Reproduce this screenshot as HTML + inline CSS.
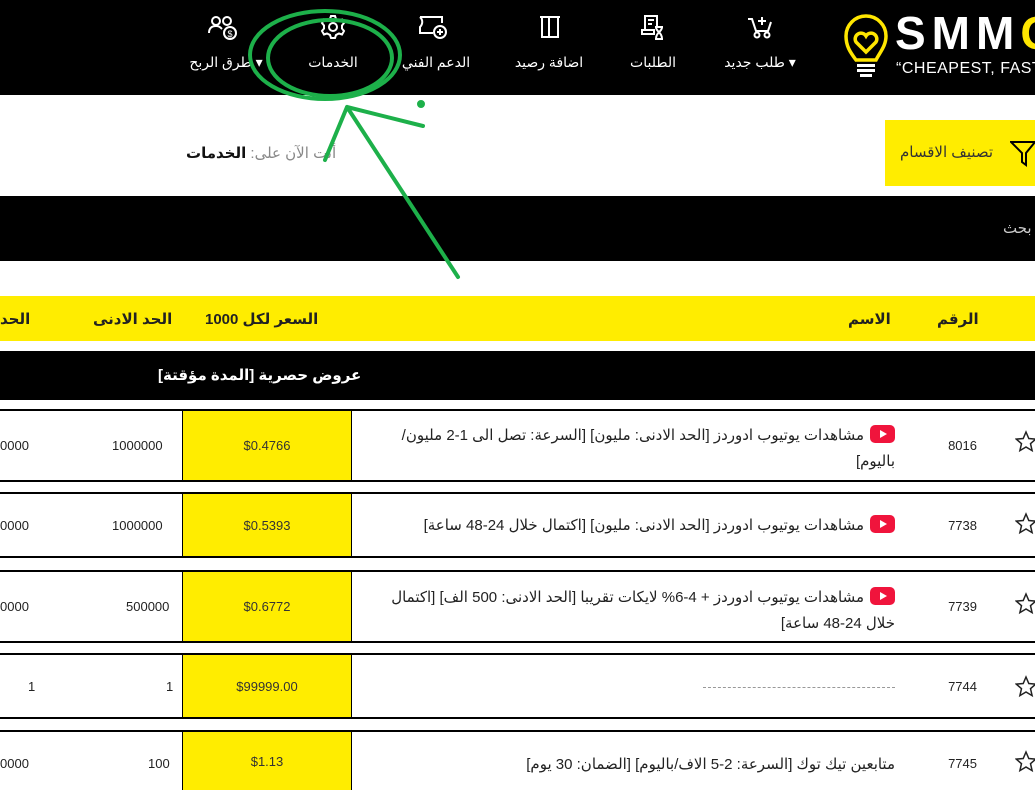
<!DOCTYPE html>
<html><head><meta charset="utf-8">
<style>
*{margin:0;padding:0;box-sizing:border-box}
body{width:1035px;height:774px;overflow:hidden;background:#fff;position:relative;font-family:"Liberation Sans","DejaVu Sans",sans-serif;font-size:14px;color:#222}
.a{position:absolute}
.nav{left:0;top:0;width:1035px;height:95px;background:#000}
.nl{position:absolute;top:54px;color:#fff;font-size:14px;white-space:nowrap;transform:translateX(-50%)}
.ic{position:absolute;top:14px}
.y{background:#ffed00}
.row{position:absolute;left:0;width:1035px;border-top:2px solid #000;border-bottom:2px solid #000}
.price{position:absolute;left:182px;width:170px;top:0;bottom:0;background:#ffed00;border-left:1px solid #000;border-right:1px solid #000;display:flex;align-items:center;justify-content:center;font-size:13px;color:#333}
.name{position:absolute;right:140px;width:525px;direction:rtl;text-align:right;font-size:15px;line-height:26px;color:#222}
.num{position:absolute;right:58px;font-size:13px}
.c1{position:absolute;left:112px;font-size:13px}
.c0{position:absolute;left:0;font-size:13px}
.yt{display:inline-block;width:25px;height:18px;background:#f0143c;border-radius:5px;vertical-align:-3px;margin-left:6px;position:relative}
.yt:after{content:"";position:absolute;left:10px;top:5px;border-left:7px solid #fff;border-top:4px solid transparent;border-bottom:4px solid transparent}
</style></head><body>
<div class="a nav"></div>
<svg class="a" style="left:842px;top:12px" width="48" height="66" viewBox="0 0 48 66">
<path d="M14 48 C8 40 4 34 4 24 A20 20 0 0 1 44 24 C44 34 38 40 34 48 Z" fill="none" stroke="#ffe600" stroke-width="3.5"/>
<path d="M24 40 L14 30 A5 5 0 0 1 24 24 A5 5 0 0 1 34 30 Z" fill="none" stroke="#ffe600" stroke-width="3.5"/>
<rect x="15" y="52" width="18" height="3" fill="#fff"/><rect x="15" y="57" width="18" height="3" fill="#fff"/><rect x="18" y="62" width="12" height="3" fill="#fff"/>
</svg>
<div class="a" style="left:895px;top:6px;color:#fff;font-weight:bold;font-size:46px;letter-spacing:6px;white-space:nowrap">SMM<span style="color:#ffe600">G</span></div>
<div class="a" style="left:896px;top:60px;color:#fff;font-size:16px;letter-spacing:0.5px;white-space:nowrap">“CHEAPEST, FASTEST</div>
<svg class="ic" style="left:746px" width="28" height="26" viewBox="0 0 28 26" fill="none" stroke="#fff" stroke-width="2"><path d="M2 5h4l4 12h12l3-9"/><circle cx="11" cy="21" r="2.5"/><circle cx="21" cy="21" r="2.5"/><path d="M16 3v8M12 7h8"/></svg>
<svg class="ic" style="left:640px" width="26" height="26" viewBox="0 0 26 26" fill="none" stroke="#fff" stroke-width="2"><path d="M5 16V2h12v10"/><path d="M2 16h12v4H2z"/><path d="M8 6h6M8 10h4"/><path d="M15 13h8M15 25h8M16 13c0 5 6 5 6 12M22 13c0 5-6 5-6 12"/></svg>
<svg class="ic" style="left:538px" width="24" height="26" viewBox="0 0 24 26" fill="none" stroke="#fff" stroke-width="2"><path d="M2 3h20M4 3v20h7V3M20 3v20h-9"/></svg>
<svg class="ic" style="left:418px" width="30" height="26" viewBox="0 0 30 26" fill="none" stroke="#fff" stroke-width="2"><path d="M2 3h22v6M2 3c3 3 3 7 0 10v6h13"/><circle cx="22" cy="18" r="6"/><path d="M22 15v6M19 18h6"/></svg>
<svg class="ic" style="left:320px" width="26" height="26" viewBox="0 0 26 26" fill="none" stroke="#fff" stroke-width="2"><path d="M11 2h4l1 3 3 1.5 3-1 2 3.5-2 2.5v3l2 2.5-2 3.5-3-1-3 1.5-1 3h-4l-1-3-3-1.5-3 1-2-3.5 2-2.5v-3L2 9l2-3.5 3 1L10 5z"/><circle cx="13" cy="13" r="4"/></svg>
<svg class="ic" style="left:208px" width="30" height="28" viewBox="0 0 30 28" fill="none" stroke="#fff" stroke-width="2"><circle cx="8" cy="7" r="4"/><path d="M1 19c0-5 3-7 7-7s5 2 6 3"/><circle cx="19" cy="7" r="4"/><circle cx="22" cy="19" r="6"/><text x="19.5" y="23" fill="#fff" stroke="none" font-size="9" font-family="Liberation Sans">$</text></svg>
<div class="nl" style="left:760px">طلب جديد ▾</div>
<div class="nl" style="left:653px">الطلبات</div>
<div class="nl" style="left:549px">اضافة رصيد</div>
<div class="nl" style="left:436px">الدعم الفني</div>
<div class="nl" style="left:333px">الخدمات</div>
<div class="nl" style="left:226px">طرق الربح ▾</div>
<div class="a y" style="left:885px;top:120px;width:150px;height:66px"></div>
<svg class="a" style="left:1010px;top:140px" width="25" height="27" viewBox="0 0 25 27" fill="none" stroke="#000" stroke-width="2"><path d="M1 2h24l-9 11v12l-4-3V13z"/></svg>
<div class="a" style="left:900px;top:143px;font-size:15px;color:#333">تصنيف الاقسام</div>
<div class="a" style="left:186px;top:144px;font-size:15px;direction:rtl;color:#888;white-space:nowrap"><span>أنت الآن على: </span><b style="color:#111">الخدمات</b></div>
<div class="a" style="left:0;top:196px;width:1035px;height:65px;background:#000"></div>
<div class="a" style="left:1003px;top:219px;color:#ccc;font-size:15px">بحث</div>
<div class="a y" style="left:0;top:296px;width:1035px;height:45px"></div>
<div class="a" style="left:937px;top:310px;font-weight:bold;font-size:15px">الرقم</div>
<div class="a" style="left:848px;top:310px;font-weight:bold;font-size:15px">الاسم</div>
<div class="a" style="left:205px;top:310px;font-weight:bold;font-size:15px">السعر لكل 1000</div>
<div class="a" style="left:93px;top:310px;font-weight:bold;font-size:15px">الحد الادنى</div>
<div class="a" style="left:0;top:310px;font-weight:bold;font-size:15px">الحد</div>
<div class="a" style="left:0;top:351px;width:1035px;height:49px;background:#000"></div>
<div class="a" style="left:158px;top:366px;color:#fff;font-weight:bold;font-size:15px">عروض حصرية [المدة مؤقتة]</div>
<div class="row" style="top:409px;height:73px">
 <div class="price">$0.4766</div>
 <div class="name" style="top:12px"><span class="yt"></span>مشاهدات يوتيوب ادوردز [الحد الادنى: مليون] [السرعة: تصل الى 1-2 مليون/ باليوم]</div>
 <div class="num" style="top:27px">8016</div><div class="c1" style="top:27px">1000000</div><div class="c0" style="top:27px">0000</div>
</div>
<div class="row" style="top:492px;height:66px">
 <div class="price">$0.5393</div>
 <div class="name" style="top:19px"><span class="yt"></span>مشاهدات يوتيوب ادوردز [الحد الادنى: مليون] [اكتمال خلال 24-48 ساعة]</div>
 <div class="num" style="top:24px">7738</div><div class="c1" style="top:24px">1000000</div><div class="c0" style="top:24px">0000</div>
</div>
<div class="row" style="top:570px;height:73px">
 <div class="price">$0.6772</div>
 <div class="name" style="top:13px"><span class="yt"></span>مشاهدات يوتيوب ادوردز + 4-6% لايكات تقريبا [الحد الادنى: 500 الف] [اكتمال خلال 24-48 ساعة]</div>
 <div class="num" style="top:27px">7739</div><div class="c1" style="top:27px;left:126px">500000</div><div class="c0" style="top:27px">0000</div>
</div>
<div class="row" style="top:653px;height:66px">
 <div class="price">$99999.00</div>
 <div class="a" style="left:703px;top:32px;width:192px;border-top:1px dashed #999"></div>
 <div class="num" style="top:24px">7744</div><div class="c1" style="top:24px;left:166px">1</div><div class="c0" style="top:24px;left:28px">1</div>
</div>
<div class="row" style="top:730px;height:60px;border-bottom:none">
 <div class="price">$1.13</div>
 <div class="name" style="top:20px">متابعين تيك توك [السرعة: 2-5 الاف/باليوم] [الضمان: 30 يوم]</div>
 <div class="num" style="top:24px">7745</div><div class="c1" style="top:24px;left:148px">100</div><div class="c0" style="top:24px">0000</div>
</div>
<svg class="a" style="left:1015px;top:430px" width="22" height="344" viewBox="0 0 22 344" fill="none" stroke="#222" stroke-width="1.5">
<g id="s"><path d="M11 2l2.8 6.5 7 .6-5.3 4.6 1.6 6.9L11 17l-6.1 3.6 1.6-6.9L1.2 9.1l7-.6z"/></g>
<use href="#s" y="82"/><use href="#s" y="162"/><use href="#s" y="245"/><use href="#s" y="320"/>
</svg>
<svg class="a" style="left:0;top:0" width="1035" height="300" fill="none" stroke="#1db04a" stroke-width="4" stroke-linecap="round">
<ellipse cx="325" cy="55" rx="75" ry="44"/>
<ellipse cx="330" cy="58" rx="62" ry="38"/>
<path d="M458 277L347 107M347 107L325 160M347 107L423 126"/>
<circle cx="421" cy="104" r="2" fill="#1db04a"/>
</svg>
</body></html>
